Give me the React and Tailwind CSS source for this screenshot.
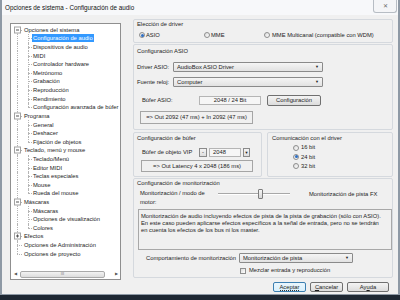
import React from "react";

const tree = [
  ["Opciones del sistema", 0, "-"],
  ["Configuración de audio", 1, null, true],
  ["Dispositivos de audio", 1],
  ["MIDI", 1],
  ["Controlador hardware", 1],
  ["Metrónomo", 1],
  ["Grabación", 1],
  ["Reproducción", 1],
  ["Rendimiento", 1],
  ["Configuración avanzada de búfer", 1, null, false, true],
  ["Programa", 0, "-"],
  ["General", 1],
  ["Deshacer", 1],
  ["Fijación de objetos", 1, null, false, true],
  ["Teclado, menú y mouse", 0, "-"],
  ["Teclado/Menú", 1],
  ["Editor MIDI", 1],
  ["Teclas especiales", 1],
  ["Mouse", 1],
  ["Rueda del mouse", 1, null, false, true],
  ["Máscaras", 0, "-"],
  ["Máscaras", 1],
  ["Opciones de visualización", 1],
  ["Colores", 1, null, false, true],
  ["Efectos", 0, "+"],
  ["Opciones de Administración", 0],
  ["Opciones de proyecto", 0],
];

function TreeRow({ item, i }) {
  const [label, lvl, box, sel, lastChild] = item;
  const first = i === 0;
  const last = i === tree.length - 1;
  return (
    <div className="relative h-[8.62px] flex items-center whitespace-nowrap">
      <span
        className={`absolute left-[6px] border-l border-dotted border-[#b4b4b4] ${first ? "top-1/2" : "top-0"} ${last ? "h-1/2" : "bottom-0"}`}
      />
      {lvl === 0 && (
        <span className="absolute left-[6px] top-1/2 w-[5px] border-t border-dotted border-[#b4b4b4]" />
      )}
      {box && (
        <span className="absolute left-[3px] top-1/2 -translate-y-1/2 w-[7px] h-[7px] border border-[#a3a3a3] bg-white flex items-center justify-center">
          <span className="relative w-[3px] h-[1px] bg-[#555]">
            {box === "+" && (
              <span className="absolute left-[1px] -top-[1px] w-[1px] h-[3px] bg-[#555]" />
            )}
          </span>
        </span>
      )}
      {lvl === 1 && (
        <>
          <span
            className={`absolute left-[17px] top-0 border-l border-dotted border-[#b4b4b4] ${lastChild ? "h-1/2" : "bottom-0"}`}
          />
          <span className="absolute left-[17px] top-1/2 w-[4px] border-t border-dotted border-[#b4b4b4]" />
        </>
      )}
      <span
        className={`${lvl === 0 ? "ml-[12px]" : "ml-[21px]"} px-[1px] leading-[8px] ${sel ? "bg-[#3399ff] text-white" : ""}`}
      >
        {label}
      </span>
    </div>
  );
}

function Radio({ on }) {
  return (
    <span className="w-[6px] h-[6px] rounded-full border border-[#8e8f8f] bg-linear-to-br from-[#dcdcdc] to-white flex items-center justify-center shrink-0">
      {on && <span className="w-[3px] h-[3px] rounded-full bg-[#2f6fc4]" />}
    </span>
  );
}

function Select({ w, text }) {
  return (
    <div
      className={`${w} h-[10px] flex items-center border border-[#8a8a8a] rounded-[1px] bg-linear-to-b from-[#f5f5f5] to-[#e2e2e2] pl-[3px] pr-[3px]`}
    >
      <span className="flex-1 truncate">{text}</span>
      <span className="text-[4px] text-[#222]">▼</span>
    </div>
  );
}

function Group({ className, children }) {
  return (
    <div className={`border border-[#d5d9de] rounded-[2px] flex flex-col ${className}`}>
      {children}
    </div>
  );
}

export default function App() {
  return (
    <div className="w-[400px] h-[300px] bg-[#1e2833] overflow-hidden font-['Liberation_Sans',Arial,sans-serif] text-[5.8px] text-[#1c1c1c]">
      <div className="h-[295px] bg-[#f0f0f0] border-l-2 border-r-2 border-b border-[#8e99a5] flex flex-col">
        {/* title bar */}
        <div className="h-[15px] bg-[#f7f8fa] flex items-center pl-[3px] shrink-0">
          <span className="text-[6.3px] text-[#111]">Opciones de sistema - Configuración de audio</span>
          <div className="ml-auto mr-[1px] self-start w-[24px] h-[13px] border border-t-0 border-[#b7bdc4] rounded-b-[3px] bg-[#f4f5f7] flex items-center justify-center text-[6px] text-[#6b6b6b]">
            ✕
          </div>
        </div>

        <div className="flex flex-1">
          {/* tree */}
          <div className="ml-[8px] mt-[8px] w-[111px] h-[257px] border border-[#8f8f8f] bg-white flex flex-col overflow-hidden">
            <div className="pt-[1.5px]">
              {tree.map((it, i) => (
                <TreeRow key={i} item={it} i={i} />
              ))}
            </div>
            <div className="mt-auto mb-[1px] h-[8px] flex items-center">
              <span className="w-[8px] text-[4px] text-[#555] text-center">◀</span>
              <div className="ml-[1px] w-[85px] h-[7px] border border-[#a9a9a9] rounded-[2px] bg-linear-to-b from-[#f3f3f3] to-[#dcdcdc] flex items-center justify-center">
                <span className="text-[4px] text-[#777]">III</span>
              </div>
              <span className="ml-auto w-[8px] text-[4px] text-[#555] text-center">▶</span>
            </div>
          </div>

          {/* right pane */}
          <div className="ml-[12px] mt-[4px] w-[260px] flex flex-col">
            <Group className="h-[24px]">
              <div className="h-[9px] leading-[9px] pl-[3px]">Elección de driver</div>
              <div className="h-[12px] flex items-center pl-[5px]">
                <span className="w-[65px] flex items-center gap-[1px]">
                  <Radio on />
                  <span>ASIO</span>
                </span>
                <span className="w-[60px] flex items-center gap-[1px]">
                  <Radio />
                  <span>MME</span>
                </span>
                <span className="flex items-center gap-[2px]">
                  <Radio />
                  <span>MME Multicanal (compatible con WDM)</span>
                </span>
              </div>
            </Group>

            <Group className="mt-[1px] h-[86px]">
              <div className="h-[12px] leading-[12px] pl-[3px]">Configuración ASIO</div>
              <div className="mt-[5px] h-[10px] flex items-center">
                <span className="w-[39px] pl-[3px]">Driver ASIO:</span>
                <Select w="w-[150px]" text="AudioBox ASIO Driver" />
              </div>
              <div className="mt-[5px] h-[10px] flex items-center">
                <span className="w-[39px] pl-[3px]">Fuente reloj:</span>
                <Select w="w-[150px]" text="Computer" />
              </div>
              <div className="mt-[8px] h-[10px] flex items-center">
                <span className="w-[65px] pl-[8px]">Búfer ASIO:</span>
                <div className="w-[62px] h-[9px] border border-[#b5b5b5] bg-[#f6f6f6] flex items-center justify-center">
                  2048 / 24 Bit
                </div>
                <div className="ml-[6px] w-[54px] h-[11px] border border-[#707070] rounded-[2px] bg-linear-to-b from-[#f4f4f4] to-[#dcdcdc] flex items-center justify-center">
                  Configuración
                </div>
              </div>
              <div className="mt-[6px] ml-[6px] w-[113px] h-[13px] border border-[#a5a5a5] flex items-center justify-center">
                =&gt; Out 2092 (47 ms) + In 2092 (47 ms)
              </div>
            </Group>

            <div className="mt-[2px] h-[45px] flex">
              <Group className="w-[129px] h-full">
                <div className="h-[10px] leading-[10px] pl-[3px]">Configuración de búfer</div>
                <div className="mt-[5px] h-[9px] flex items-center">
                  <span className="w-[65px] pl-[8px]">Búfer de objeto VIP</span>
                  <span className="w-[8px] h-[9px] border border-[#8a8a8a] bg-linear-to-b from-[#f4f4f4] to-[#dedede] flex items-center justify-center leading-none">
                    -
                  </span>
                  <span className="ml-[2px] w-[32px] h-[9px] border border-[#b5b5b5] bg-[#f6f6f6] flex items-center pl-[3px]">
                    2048
                  </span>
                  <span className="ml-[2px] w-[7px] h-[9px] border border-[#8a8a8a] bg-linear-to-b from-[#f4f4f4] to-[#dedede] flex items-center justify-center text-[4px]">
                    ▼
                  </span>
                </div>
                <div className="mt-[3px] ml-[7px] w-[112px] h-[12px] border border-[#a5a5a5] flex items-center justify-center">
                  =&gt; Out Latency 4 x 2048 (186 ms)
                </div>
              </Group>
              <Group className="ml-[5px] w-[126px] h-full">
                <div className="h-[10px] leading-[10px] pl-[4px]">Comunicación con el driver</div>
                <div className="pl-[25px] flex flex-col">
                  {[
                    ["16 bit", false],
                    ["24 bit", true],
                    ["32 bit", false],
                  ].map(([t, on]) => (
                    <div key={t} className="h-[9.3px] flex items-center gap-[2px]">
                      <Radio on={on} />
                      <span>{t}</span>
                    </div>
                  ))}
                </div>
              </Group>
            </div>

            <Group className="mt-[1px] h-[100px]">
              <div className="h-[8px] leading-[8px] pl-[3px]">Configuración de monitorización</div>
              <div className="mt-[2px] flex items-start">
                <span className="w-[84px] pl-[6px] leading-[9px]">
                  Monitorización / modo de
                  <br />
                  motor:
                </span>
                <div className="relative w-[72px] h-[10px]">
                  <span className="absolute left-0 right-0 top-[4px] h-[2px] border-t border-[#a8a8a8] border-b border-b-white" />
                  <span className="absolute left-[40px] top-0 w-[5px] h-[10px] border border-[#7d7d7d] rounded-[1px] bg-linear-to-b from-[#f6f6f6] to-[#d8d8d8]" />
                </div>
                <span className="ml-[19px] leading-[10px]">Monitorización de pista FX</span>
              </div>
              <div className="mt-[2px] ml-[4px] w-[254px] h-[41px] border border-[#a8a8a8] pl-[2px] pt-[2.5px] leading-[7px] whitespace-nowrap">
                Monitorización de audio incluyendo efectos de pista de la pista de grabación (sólo con ASIO).
                <br />
                En este caso pueden aplicarse efectos específicos a la señal de entrada, pero no se tendrán
                <br />
                en cuenta los efectos de los bus ni los master.
              </div>
              <div className="mt-[3px] h-[10px] flex items-center">
                <span className="w-[105px] pl-[12px]">Comportamiento de monitorización</span>
                <Select w="w-[114px]" text="Monitorización de pista" />
              </div>
              <div className="mt-[4px] h-[7px] flex items-center pl-[106px]">
                <span className="w-[6px] h-[6px] border border-[#8e8f8f] bg-linear-to-br from-[#dcdcdc] to-white" />
                <span className="ml-[3px]">Mezclar entrada y reproducción</span>
              </div>
            </Group>

            <div className="mt-[4px] h-[10px] flex justify-end gap-[4px] pr-[4px]">
              <div className="w-[33px] h-[10px] border border-[#3c7fb1] rounded-[2px] bg-linear-to-b from-[#eaf6fd] to-[#d9f0fc] flex items-center justify-center">
                <span className="border-b border-dotted border-[#333] leading-[6px]">Aceptar</span>
              </div>
              <div className="w-[33px] h-[10px] border border-[#707070] rounded-[2px] bg-linear-to-b from-[#f4f4f4] to-[#dcdcdc] flex items-center justify-center">
                <span>
                  <span className="underline">C</span>ancelar
                </span>
              </div>
              <div className="w-[42px] h-[10px] border border-[#707070] rounded-[2px] bg-linear-to-b from-[#f4f4f4] to-[#dcdcdc] flex items-center justify-center">
                <span>
                  Ay<span className="underline">u</span>da
                </span>
              </div>
            </div>
          </div>
        </div>
      </div>
    </div>
  );
}
